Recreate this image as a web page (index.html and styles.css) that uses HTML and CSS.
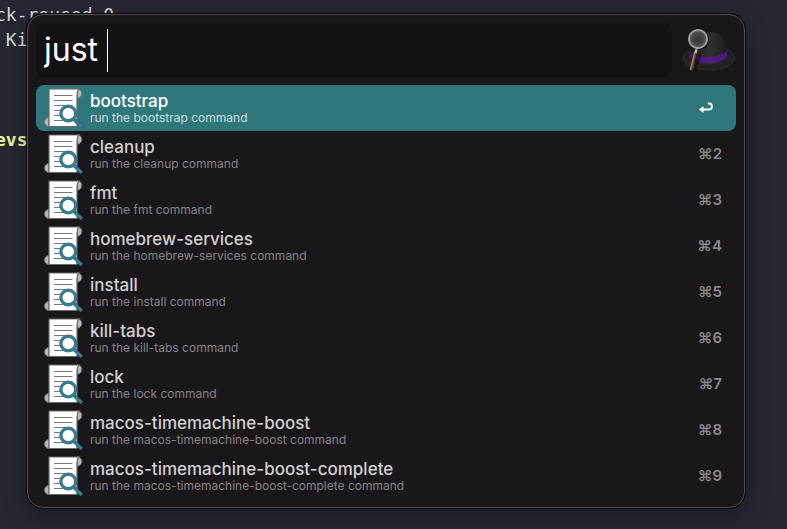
FILE: index.html
```html
<!DOCTYPE html>
<html lang="en">
<head>
<meta charset="utf-8">
<title>Launcher</title>
<link rel="stylesheet" href="styles.css">
</head>
<body>
<pre class="terminal">ck-reused 0
 Ki



<b class="prompt">evs</b></pre>

<svg class="symbols" aria-hidden="true">
  <symbol id="script" viewBox="0 0 40 40">
    <path d="M33 1h2c2 1 3 3 2.700 5-.4 2.500-2 4-4.200 4.200zM5 38.500c-2.500 0-4.500-2-4.500-4.500s2-4.500 4.500-4.500z" fill="#b9b9b9" stroke="#737373"/>
    <path d="M5 1h30C33.500 2.500 33 4.500 33 7v31.500H5z" fill="#fff" stroke="#686868" stroke-width="1.200"/>
    <path d="M10 7.500h18.500M10 12.500h18.500M10 17.500h18.500M10 22.500h8M10 27.500h8M10 32.500h18.500" stroke="#777" stroke-width="1"/>
    <path d="M29.500 31l8.300 8" stroke="#505a60" stroke-width="3.600"/>
    <path d="M29.500 31l8 7.700" stroke="#2389a9" stroke-width="2.200"/>
    <circle cx="24.300" cy="25.500" r="7.400" fill="#fff" stroke="#505a60" stroke-width="3.200"/>
    <circle cx="24.300" cy="25.500" r="7.400" fill="none" stroke="#2389a9" stroke-width="2"/>
  </symbol>
</svg>

<main class="launcher">
  <header class="top">
    <div class="search">
      <input class="query" type="text" aria-label="Search" value="just " spellcheck="false">
      <span class="caret"></span>
    </div>
    <svg class="hat" viewBox="0 0 54 46" aria-hidden="true">
      <defs>
        <linearGradient id="felt" x1="0" x2="1"><stop stop-color="#171717"/><stop offset=".55" stop-color="#303030"/><stop offset="1" stop-color="#1c1b1d"/></linearGradient>
        <linearGradient id="band" x1="0" x2="1"><stop stop-color="#42146c"/><stop offset=".55" stop-color="#571b8b"/><stop offset="1" stop-color="#481678"/></linearGradient>
        <radialGradient id="lens"><stop stop-color="#353535"/><stop offset=".7" stop-color="#484848"/><stop offset="1" stop-color="#6c6c6c"/></radialGradient>
      </defs>
      <ellipse cx="27" cy="31" rx="26" ry="12" fill="#222123" stroke="#303031" stroke-width=".8"/>
      <path d="M8 30C9 14 16 5 28 5s17 9 17 22v5c-8 7-29 7-37 0z" fill="url(#felt)"/>
      <path d="M8 25c9 7 28 7 37-1v6c-7 8-31 8-38 0z" fill="url(#band)"/>
      <path d="M17 27l-5 16" stroke="#111" stroke-width="5" opacity=".55"/>
      <path d="M13.500 25l-4.500 18" stroke="#593a26" stroke-width="3.400"/>
      <path d="M13 25L8.500 43" stroke="#a7784d" stroke-width="1.500"/>
      <path d="M15 20l-1.500 6" stroke="#b8b8b8" stroke-width="2.400"/>
      <circle cx="17" cy="13" r="10" fill="#111" opacity=".6"/>
      <circle cx="16" cy="12" r="9" fill="url(#lens)" stroke="#858585" stroke-width="2"/>
      <circle cx="16" cy="12" r="9.200" fill="none" stroke="#b8b8b8" stroke-width=".8"/>
    </svg>
  </header>
  <div class="results">
    <button class="row selected" type="button"><svg class="icon"><use href="#script"/></svg><span class="text"><span class="name">bootstrap</span><span class="hint">run the bootstrap command</span></span><svg class="enter" viewBox="0 0 16 12" aria-label="Return"><path d="M10.500 1.500h.5a3 3 0 0 1 0 6H3" fill="none" stroke="#fff" stroke-width="1.800" stroke-linecap="round"/><path d="M5.500 4v7L1 7.500z" fill="#fff"/></svg></button>
    <button class="row" type="button"><svg class="icon"><use href="#script"/></svg><span class="text"><span class="name">cleanup</span><span class="hint">run the cleanup command</span></span><kbd class="key">⌘2</kbd></button>
    <button class="row" type="button"><svg class="icon"><use href="#script"/></svg><span class="text"><span class="name">fmt</span><span class="hint">run the fmt command</span></span><kbd class="key">⌘3</kbd></button>
    <button class="row" type="button"><svg class="icon"><use href="#script"/></svg><span class="text"><span class="name">homebrew-services</span><span class="hint">run the homebrew-services command</span></span><kbd class="key">⌘4</kbd></button>
    <button class="row" type="button"><svg class="icon"><use href="#script"/></svg><span class="text"><span class="name">install</span><span class="hint">run the install command</span></span><kbd class="key">⌘5</kbd></button>
    <button class="row" type="button"><svg class="icon"><use href="#script"/></svg><span class="text"><span class="name">kill-tabs</span><span class="hint">run the kill-tabs command</span></span><kbd class="key">⌘6</kbd></button>
    <button class="row" type="button"><svg class="icon"><use href="#script"/></svg><span class="text"><span class="name">lock</span><span class="hint">run the lock command</span></span><kbd class="key">⌘7</kbd></button>
    <button class="row" type="button"><svg class="icon"><use href="#script"/></svg><span class="text"><span class="name">macos-timemachine-boost</span><span class="hint">run the macos-timemachine-boost command</span></span><kbd class="key">⌘8</kbd></button>
    <button class="row" type="button"><svg class="icon"><use href="#script"/></svg><span class="text"><span class="name">macos-timemachine-boost-complete</span><span class="hint">run the macos-timemachine-boost-complete command</span></span><kbd class="key">⌘9</kbd></button>
  </div>
</main>
</body>
</html>
```
FILE: styles.css
```css
* { box-sizing: border-box; }
body {
  margin: 0;
  padding: 14px 42px 21px 27px;
  min-height: 100vh;
  overflow: hidden;
  background: #262733;
  font-family: Inter, "Liberation Sans", sans-serif;
}
.symbols { position: absolute; width: 0; height: 0; }
.terminal {
  position: absolute;
  top: 2px;
  left: -5px;
  margin: 0;
  color: #d7d8d6;
  font: 18px/25px "DejaVu Sans Mono", monospace;
}
.prompt { color: #edf498; }
.launcher {
  position: relative;
  padding: 8px;
  background: #19171a;
  border: 1px solid #505052;
  border-radius: 16px;
  box-shadow: 0 0 0 1px #08080a, 0 8px 24px rgba(0, 0, 0, .3);
}
.top { display: flex; align-items: center; gap: 10px; margin-bottom: 8px; }
.search {
  flex: 1;
  display: flex;
  align-items: center;
  height: 54px;
  padding: 0 8px;
  background: #131114;
  border-radius: 8px;
}
.query {
  field-sizing: content;
  padding: 0;
  border: 0;
  outline: 0;
  background: none;
  color: #fff;
  font: 32px/44px Inter, sans-serif;
  white-space: pre;
}
.caret { width: 1px; height: 43px; background: #fff; }
.hat { width: 54px; height: 46px; }
.row {
  display: flex;
  align-items: center;
  width: 100%;
  height: 46px;
  padding: 0 14px 0 8px;
  border: 0;
  border-radius: 8px;
  background: none;
  color: #d1d0d1;
  font-family: inherit;
  text-align: left;
}
.icon { flex: none; width: 40px; height: 40px; margin-right: 6px; overflow: visible; }
.text { flex: 1; display: flex; flex-direction: column; }
.name { font-size: 17px; font-weight: 500; line-height: 20px; }
.hint { color: #858486; font-size: 12px; line-height: 14px; }
.key { color: #89888a; font: 600 15px/20px Inter, sans-serif; }
.selected { background: #30777c; color: #fff; }
.selected .hint { color: #c9dfe0; }
.enter { width: 16px; height: 12px; margin-right: 8px; }
```
